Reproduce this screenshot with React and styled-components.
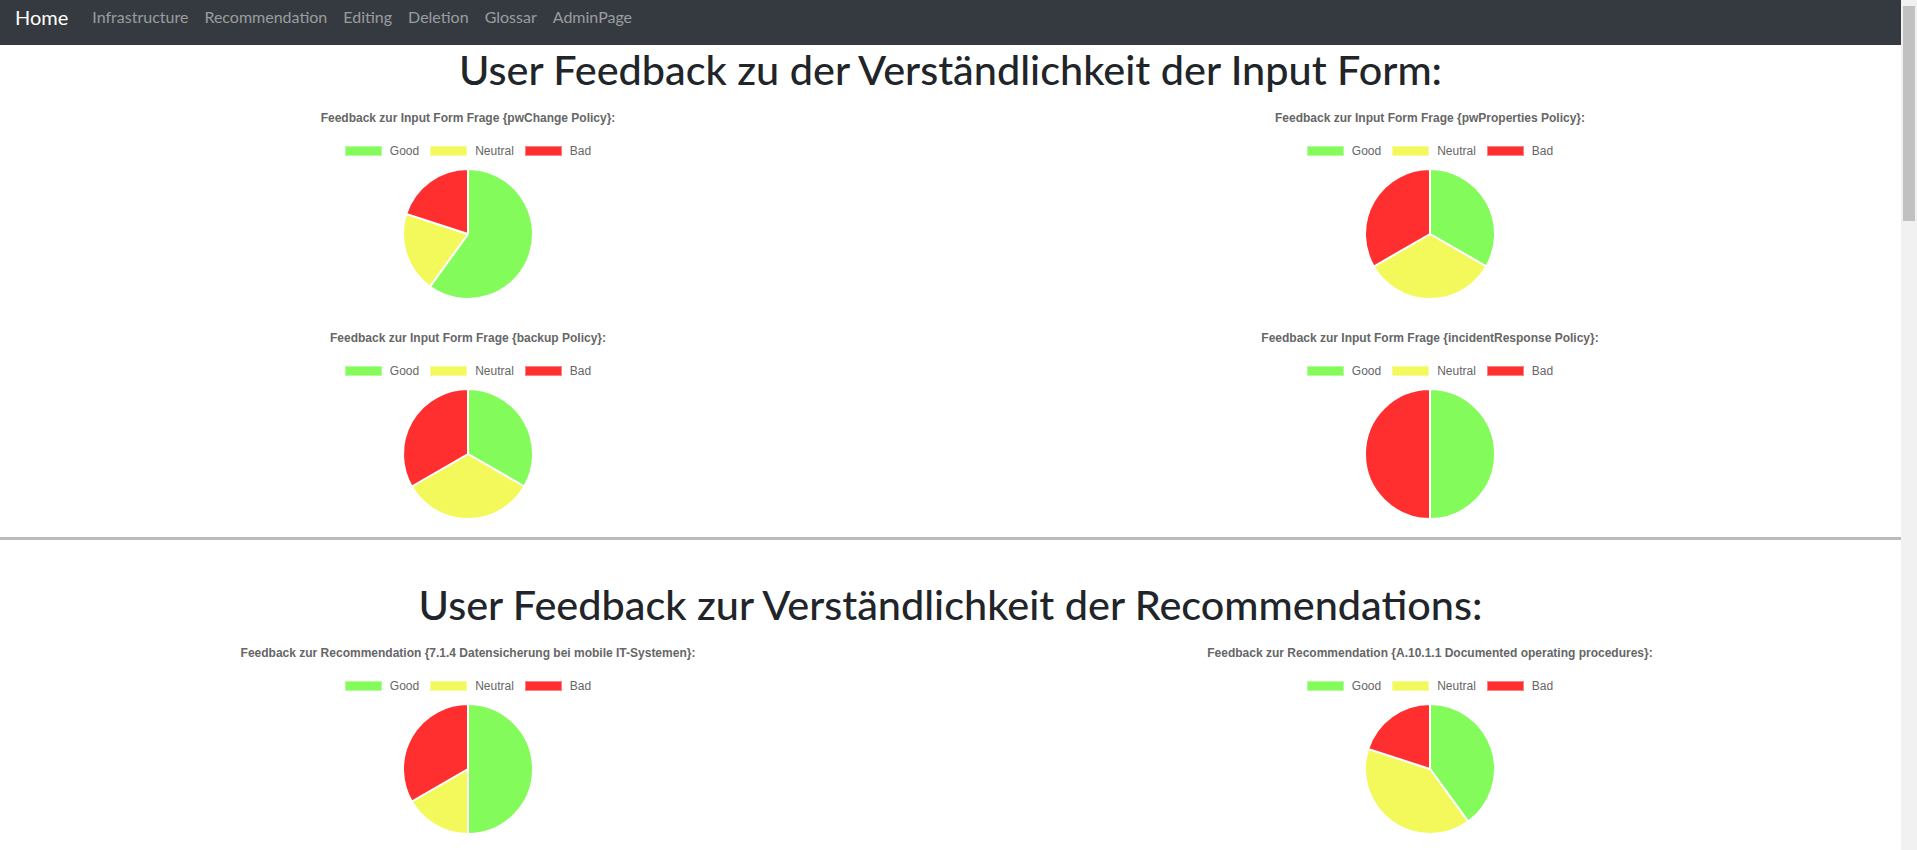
import React from "react";
import styled, { createGlobalStyle } from "styled-components";

const COLORS = { good: "#83fb5a", neutral: "#f3f95a", bad: "#ff2f2f" };

const inputForm = [
  { title: "Feedback zur Input Form Frage {pwChange Policy}:", values: [3, 1, 1] },
  { title: "Feedback zur Input Form Frage {pwProperties Policy}:", values: [1, 1, 1] },
  { title: "Feedback zur Input Form Frage {backup Policy}:", values: [1, 1, 1] },
  { title: "Feedback zur Input Form Frage {incidentResponse Policy}:", values: [1, 0, 1] },
];

const recommendations = [
  {
    title: "Feedback zur Recommendation {7.1.4 Datensicherung bei mobile IT-Systemen}:",
    values: [3, 1, 2],
  },
  {
    title: "Feedback zur Recommendation {A.10.1.1 Documented operating procedures}:",
    values: [2, 2, 1],
  },
];

const navLinks = ["Infrastructure", "Recommendation", "Editing", "Deletion", "Glossar", "AdminPage"];

const slicePath = (cx, cy, r, from, to) => {
  const a0 = from * 2 * Math.PI - Math.PI / 2;
  const a1 = to * 2 * Math.PI - Math.PI / 2;
  const x0 = cx + r * Math.cos(a0);
  const y0 = cy + r * Math.sin(a0);
  const x1 = cx + r * Math.cos(a1);
  const y1 = cy + r * Math.sin(a1);
  const large = to - from > 0.5 ? 1 : 0;
  return `M ${cx} ${cy} L ${x0} ${y0} A ${r} ${r} 0 ${large} 1 ${x1} ${y1} Z`;
};

const Pie = ({ values }) => {
  const total = values.reduce((a, b) => a + b, 0);
  const colors = [COLORS.good, COLORS.neutral, COLORS.bad];
  let acc = 0;
  return (
    <PieSvg width="134" height="134" viewBox="0 0 134 134">
      {values.map((v, i) => {
        const from = acc / total;
        acc += v;
        const to = acc / total;
        if (v === 0) return null;
        return (
          <path
            key={i}
            d={slicePath(67, 67, 65, from, to)}
            fill={colors[i]}
            stroke="#fff"
            strokeWidth="2"
            strokeLinejoin="bevel"
          />
        );
      })}
    </PieSvg>
  );
};

const FeedbackChart = ({ title, values }) => (
  <ChartBox>
    <ChartTitle>{title}</ChartTitle>
    <Legend>
      <LegendItem>
        <LegendBox color={COLORS.good} />
        Good
      </LegendItem>
      <LegendItem>
        <LegendBox color={COLORS.neutral} />
        Neutral
      </LegendItem>
      <LegendItem>
        <LegendBox color={COLORS.bad} />
        Bad
      </LegendItem>
    </Legend>
    <Pie values={values} />
  </ChartBox>
);

const App = () => {
  return (
    <Frame>
      <GlobalStyle />
      <Page>
        <Navbar>
          <Brand href="#">Home</Brand>
          {navLinks.map((l) => (
            <NavLink key={l} href="#">
              {l}
            </NavLink>
          ))}
        </Navbar>

        <Section>
          <Heading>User Feedback zu der Verständlichkeit der Input Form:</Heading>
          <ChartGrid>
            {inputForm.map((c) => (
              <FeedbackChart key={c.title} {...c} />
            ))}
          </ChartGrid>
        </Section>

        <Divider />

        <Section>
          <Heading>User Feedback zur Verständlichkeit der Recommendations:</Heading>
          <ChartGrid>
            {recommendations.map((c) => (
              <FeedbackChart key={c.title} {...c} />
            ))}
          </ChartGrid>
        </Section>
      </Page>
      <ScrollRail>
        <ScrollThumb />
      </ScrollRail>
    </Frame>
  );
};

export default App;

const GlobalStyle = createGlobalStyle`
  html, body {
    margin: 0;
    padding: 0;
    height: 100%;
    overflow: hidden;
    background: #fff;
  }
  body {
    font-family: Lato, "Noto Sans", sans-serif;
    color: #212529;
  }
`;

const Frame = styled.div`
  display: flex;
  height: 100vh;
`;

const Page = styled.main`
  flex: 1;
  min-width: 0;
  overflow: hidden;
`;

const ScrollRail = styled.div`
  flex: 0 0 16px;
  display: flex;
  flex-direction: column;
  align-items: center;
  padding-top: 6px;
  background: #f1f1f1;
  box-sizing: border-box;
`;

const ScrollThumb = styled.div`
  width: 12px;
  height: 215px;
  background: #c1c1c1;
`;

const Navbar = styled.nav`
  display: flex;
  align-items: flex-start;
  height: 45px;
  padding: 0 15px;
  background: #343a40;
  box-sizing: border-box;
`;

const Brand = styled.a`
  padding-top: 2px;
  margin-right: 16px;
  font-size: 20px;
  line-height: 30px;
  color: #fff;
  text-decoration: none;
`;

const NavLink = styled.a`
  padding: 5px 8px 0;
  font-size: 16px;
  line-height: 24px;
  color: rgba(255, 255, 255, 0.5);
  text-decoration: none;
`;

const Section = styled.section`
  display: flex;
  flex-direction: column;
  align-items: center;
`;

const Heading = styled.h1`
  margin: 0 0 8px;
  font-size: 41.4px;
  font-weight: 500;
  line-height: 48px;
  color: #212529;
  text-align: center;
`;

const ChartGrid = styled.div`
  display: grid;
  grid-template-columns: repeat(2, 480px);
  column-gap: 482px;
  row-gap: 20px;
  align-self: flex-start;
  padding-left: 228px;
`;

const ChartBox = styled.div`
  display: flex;
  flex-direction: column;
  align-items: center;
  font-family: "Liberation Sans", Arial, sans-serif;
  color: #666;
`;

const ChartTitle = styled.div`
  margin-top: 10px;
  font-size: 12px;
  font-weight: bold;
  line-height: 14px;
  white-space: nowrap;
`;

const Legend = styled.div`
  display: flex;
  gap: 11px;
  margin-top: 20px;
  height: 12px;
  font-size: 12px;
  line-height: 12px;
`;

const LegendItem = styled.div`
  display: flex;
  align-items: center;
  gap: 8px;
`;

const LegendBox = styled.span`
  width: 37px;
  height: 10px;
  background: ${(p) => p.color};
  box-shadow: inset 0 0 0 1px rgba(255, 255, 255, 0.4);
`;

const PieSvg = styled.svg`
  display: block;
  margin-top: 10px;
`;

const Divider = styled.hr`
  margin: 16px 0 40px;
  border: 0;
  border-top: 3px solid #bbb;
`;
